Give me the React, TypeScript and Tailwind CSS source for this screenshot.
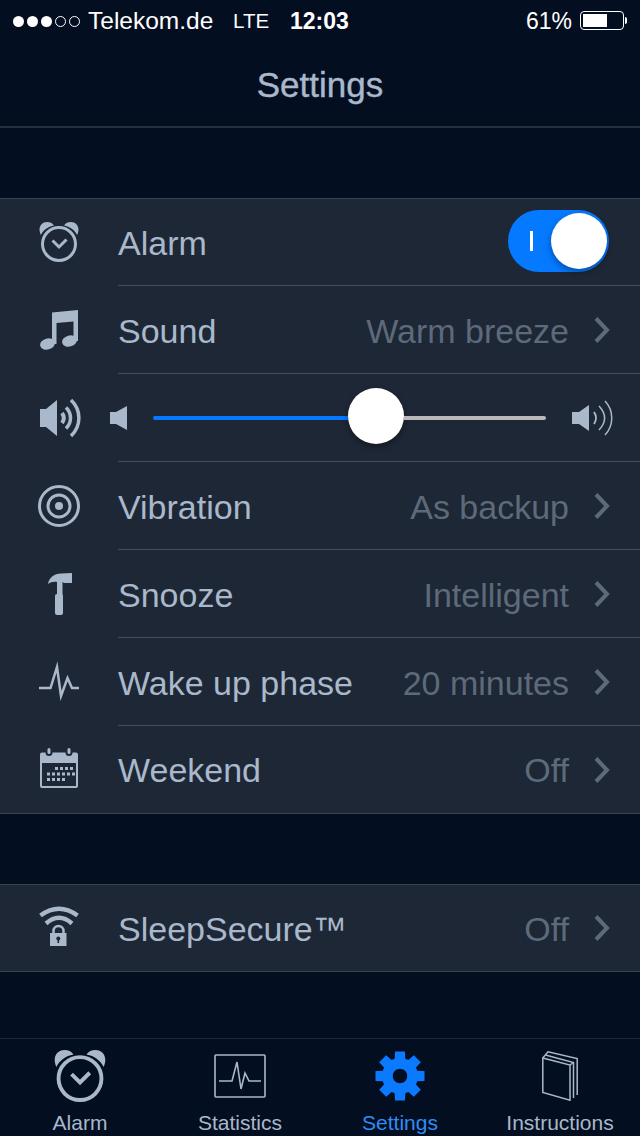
import type { ReactNode } from 'react';

const font = '[font-family:"Liberation_Sans",Arial,sans-serif]';
const ink = '#a9b8cb';

function Chevron() {
  return (
    <svg width="16" height="26" viewBox="0 0 16 26" className="ml-[25px] shrink-0">
      <path d="M2 1.500L13 13 2 24.500" fill="none" stroke="#5d6a7a" strokeWidth="4" />
    </svg>
  );
}

function AlarmIcon({ size = 40, stroke = 3 }: { size?: number; stroke?: number }) {
  return (
    <svg width={size} height={size} viewBox="0 0 40 40" fill="none">
      <circle cx="20" cy="22" r="16.500" stroke={ink} strokeWidth={stroke} />
      <path d="M13.500 18.500l6.500 6.500 7.500-7.500" stroke={ink} strokeWidth={stroke} />
      <path d="M1.800 13C-1.500 6 2 0 8 0c3 0 5.500 1 7 3.500C9 4.500 4.500 8 1.800 13z" fill={ink} />
      <path d="M38.200 13C41.500 6 38 0 32 0c-3 0-5.500 1-7 3.500C31 4.500 35.500 8 38.200 13z" fill={ink} />
    </svg>
  );
}

function NoteIcon() {
  return (
    <svg width="38" height="40" viewBox="0 0 38 40" fill={ink}>
      <path d="M12 2.500L38 0v31h-4.500V11.500L16.500 13v21H12z" />
      <ellipse cx="7.500" cy="34" rx="7.500" ry="5.500" transform="rotate(-15 7.500 34)" />
      <ellipse cx="29.500" cy="31" rx="7.500" ry="5.500" transform="rotate(-15 29.500 31)" />
    </svg>
  );
}

function SpeakerIcon() {
  return (
    <svg width="41" height="40" viewBox="0 0 41 40" fill="none" className="ml-[3px]">
      <path d="M0 11h6L17 2v36L6 29H0z" fill={ink} />
      <path d="M22 15c2.200 3 2.200 7 0 10" stroke={ink} strokeWidth="4" />
      <path d="M26 9.500c6 6 6 15 0 21" stroke={ink} strokeWidth="3.500" />
      <path d="M31 2c10.500 10 10.500 26 0 36" stroke={ink} strokeWidth="3.500" />
    </svg>
  );
}

function VibrationIcon() {
  return (
    <svg width="42" height="42" viewBox="0 0 42 42" fill="none" stroke={ink}>
      <circle cx="21" cy="21" r="19.500" strokeWidth="3" />
      <circle cx="21" cy="21" r="11" strokeWidth="3" />
      <circle cx="21" cy="21" r="4" fill={ink} stroke="none" />
    </svg>
  );
}

function HammerIcon() {
  return (
    <svg width="24" height="42" viewBox="0 0 24 42" fill={ink} className="ml-[2px]">
      <path d="M0 11C1 5 6 .5 13 .5L24 0v10h-8l-1.500-1H9C6 8.500 2.500 9 0 11z" />
      <rect x="9" y="8" width="5.500" height="15" />
      <rect x="7" y="21" width="8" height="21" rx="2" />
    </svg>
  );
}

function PulseIcon() {
  return (
    <svg width="40" height="40" viewBox="0 0 40 40" fill="none" className="mb-[3px]">
      <path d="M0 27h11.500L18 6l4 29 6.500-18 4.500 10h7" stroke={ink} strokeWidth="2.500" strokeMiterlimit="10" />
    </svg>
  );
}

const calendarDots = [
  { y: 19, xs: [15, 20, 25, 30] },
  { y: 24.5, xs: [7, 12, 17, 22, 27, 32] },
  { y: 30, xs: [7, 12, 17, 22] },
];

function CalendarIcon() {
  return (
    <svg width="38" height="40" viewBox="0 0 38 40" fill="none" className="mb-[3px]">
      <path
        d="M2 4.500h3.500a3.500 3.500 0 0 0 7 0h13a3.500 3.500 0 0 0 7 0H36a2 2 0 0 1 2 2V38a2 2 0 0 1-2 2H2a2 2 0 0 1-2-2V6.500a2 2 0 0 1 2-2z"
        fill={ink}
      />
      <rect x="2" y="15" width="34" height="23" fill="#1e2735" />
      <rect x="7.500" y="0" width="3" height="6" rx="1.500" fill={ink} />
      <rect x="27.500" y="0" width="3" height="6" rx="1.500" fill={ink} />
      {calendarDots.map((row) =>
        row.xs.map((x) => <rect key={`${row.y}-${x}`} x={x} y={row.y} width="3" height="3" fill={ink} />),
      )}
    </svg>
  );
}

function SecureIcon() {
  return (
    <svg width="40" height="40" viewBox="0 0 40 40" fill="none" className="mb-[4px]">
      <path d="M1.500 9.500Q20-4 38.500 9.500" stroke={ink} strokeWidth="4.500" />
      <path d="M7 17.500Q20 6 33 17.500" stroke={ink} strokeWidth="4.500" />
      <path d="M14.500 28v-3a5 5 0 0 1 10 0v3" stroke={ink} strokeWidth="2.500" />
      <rect x="11" y="27" width="16.500" height="13" fill={ink} />
      <circle cx="19.300" cy="32.500" r="2" fill="#1e2735" />
      <rect x="18.500" y="33" width="1.600" height="4" fill="#1e2735" />
    </svg>
  );
}

function StatsIcon() {
  return (
    <svg width="52" height="44" viewBox="0 0 52 44" fill="none">
      <rect x="1" y="1" width="50" height="42" rx="1" stroke={ink} strokeWidth="1.600" />
      <path d="M5 27h13l5-19 4 27 4-16 4 8h12" stroke={ink} strokeWidth="1.600" />
    </svg>
  );
}

// eight teeth, worked out from the centre of a 50 box
function gearPath() {
  const pts: string[] = [];
  for (let i = 0; i < 8; i++) {
    const a = (i * Math.PI) / 4 - Math.PI / 2;
    const p = (r: number, d: number) => `${(25 + r * Math.cos(a + d)).toFixed(2)} ${(25 + r * Math.sin(a + d)).toFixed(2)}`;
    pts.push(p(18, -0.3), p(25, -0.2), p(25, 0.2), p(18, 0.3));
  }
  return `M${pts.join('L')}zM25 17.700a7.300 7.300 0 1 0 0 14.600 7.300 7.300 0 0 0 0-14.600z`;
}

function GearIcon() {
  return (
    <svg width="50" height="50" viewBox="0 0 50 50">
      <path fillRule="evenodd" fill="#0a7aff" d={gearPath()} />
    </svg>
  );
}

function BookIcon() {
  return (
    <svg width="36" height="50" viewBox="0 0 36 50" fill="none" stroke={ink} strokeWidth="1.500">
      <path d="M.8 7L28 14v35.200L.8 41.500z" />
      <path d="M.8 7L6 .8l29.200 6.700V44" />
      <path d="M3.500 4l28 7.500V47" />
      <path d="M28 14l3.500-2.500" />
    </svg>
  );
}

function Row({ icon, label, value, last, height }: { icon: ReactNode; label: string; value?: string; last?: boolean; height: string }) {
  const nudge = last ? 'mt-[2px]' : 'mt-[4px]';
  return (
    <div className={`flex items-stretch ${height}`}>
      <div className="flex w-[118px] shrink-0 items-center justify-center">{icon}</div>
      <div className={`flex min-w-0 flex-1 items-center pr-[30px] ${last ? '' : 'border-b border-[#454d59]'}`}>
        <span className={`text-[34px] text-[#a9b8cb] ${nudge}`}>{label}</span>
        <span className={`ml-auto text-[34px] text-[#5d6a7a] ${nudge}`}>{value}</span>
        <Chevron />
      </div>
    </div>
  );
}

function Tab({ icon, label, active }: { icon: ReactNode; label: string; active?: boolean }) {
  return (
    <div className="flex w-[160px] flex-col items-center">
      <div className="flex h-[72px] items-center justify-center pt-[1px]">{icon}</div>
      <span className={`text-[21px] leading-[24px] ${active ? 'text-[#2f8cf5]' : 'text-[#a9b8cb]'}`}>{label}</span>
    </div>
  );
}

export default function App() {
  return (
    <div className={`flex h-[1136px] w-[640px] flex-col overflow-hidden bg-[#030e20] ${font}`}>
      {/* status bar */}
      <div className="flex h-[40px] items-center px-[13px] pt-[2px] text-[24px] text-white">
        <div className="flex gap-[3px]">
          <span className="h-[11px] w-[11px] rounded-full bg-white" />
          <span className="h-[11px] w-[11px] rounded-full bg-white" />
          <span className="h-[11px] w-[11px] rounded-full bg-white" />
          <span className="h-[11px] w-[11px] rounded-full border border-white" />
          <span className="h-[11px] w-[11px] rounded-full border border-white" />
        </div>
        <span className="ml-[8px] w-[145px] text-[24.500px]">Telekom.de</span>
        <span className="w-[57px] text-[20.500px]">LTE</span>
        <span className="text-[23px] font-bold">12:03</span>
        <span className="ml-auto text-[23px]">61%</span>
        <div className="mb-[2px] ml-[8px] flex items-center">
          <div className="flex h-[19px] w-[44px] rounded-[4px] border border-white p-[2px]">
            <div className="w-[24px] bg-white" />
          </div>
          <div className="ml-[1px] h-[7px] w-[2px] rounded-r-full bg-white" />
        </div>
      </div>

      {/* nav */}
      <div className="flex h-[88px] items-center justify-center border-b-2 border-[#262f3c]">
        <span className="mt-[4px] text-[35px] text-[#a9b8cb] [-webkit-text-stroke:0.4px_#a9b8cb]">Settings</span>
      </div>

      {/* main group */}
      <div className="mt-[70px] border-y border-[#3a424e] bg-[#1e2735]">
        <div className="flex h-[87px] items-stretch">
          <div className="flex w-[118px] shrink-0 items-center justify-center pb-[2px]"><AlarmIcon /></div>
          <div className="flex flex-1 items-center justify-between border-b border-[#454d59] pr-[31px]">
            <span className="mt-[2px] text-[34px] text-[#a9b8cb]">Alarm</span>
            <div className="mb-[2px] flex h-[62px] w-[101px] items-center rounded-full bg-[#0579ff] pl-[22px] pr-[2px]">
              <span className="h-[20px] w-[3px] bg-white" />
              <span className="ml-auto h-[56px] w-[56px] rounded-full bg-white shadow-[0_3px_6px_rgba(0,0,0,0.35)]" />
            </div>
          </div>
        </div>
        <Row height="h-[88px]" icon={<NoteIcon />} label="Sound" value="Warm breeze" />
        <div className="flex h-[88px] items-stretch">
          <div className="flex w-[118px] shrink-0 items-center justify-center"><SpeakerIcon /></div>
          <div className="flex flex-1 items-center border-b border-[#454d59] pr-[26px]">
            <svg width="17" height="24" viewBox="0 0 17 24" className="ml-[-8px] mr-[26px] shrink-0">
              <path d="M0 6h6L17 0v24L6 18H0z" fill="#a9b8cb" />
            </svg>
            <div className="h-[4px] w-[195px] rounded-l-full bg-[#0579ff]" />
            <div className="mb-[3px] h-[56px] w-[56px] shrink-0 rounded-full bg-white shadow-[0_3px_6px_rgba(0,0,0,0.35)]" />
            <div className="h-[4px] w-[142px] rounded-r-full bg-[#b9b9b9]" />
            <svg width="41" height="36" viewBox="0 0 41 36" fill="none" className="ml-[26px] shrink-0">
              <path d="M0 12h7L17 5v26L7 24H0z" fill="#a9b8cb" />
              <path d="M22 12c2.500 3.500 2.500 8.500 0 12" stroke="#a9b8cb" strokeWidth="2" />
              <path d="M27 6c7.500 8 7.500 16 0 24" stroke="#a9b8cb" strokeWidth="1.500" />
              <path d="M33 1c9 9.500 9 24.500 0 34" stroke="#a9b8cb" strokeWidth="1.500" />
            </svg>
          </div>
        </div>
        <Row height="h-[88px]" icon={<VibrationIcon />} label="Vibration" value="As backup" />
        <Row height="h-[88px]" icon={<HammerIcon />} label="Snooze" value="Intelligent" />
        <Row height="h-[88px]" icon={<PulseIcon />} label="Wake up phase" value="20 minutes" />
        <Row height="h-[87px]" icon={<CalendarIcon />} label="Weekend" value="Off" last />
      </div>

      {/* secure group */}
      <div className="mt-[70px] border-y border-[#3a424e] bg-[#1e2735]">
        <Row height="h-[86px]" icon={<SecureIcon />} label="SleepSecure™" value="Off" last />
      </div>

      {/* tab bar */}
      <div className="mt-auto flex h-[98px] border-t border-[#1b2633]">
        <Tab icon={<AlarmIcon size={52} stroke={3} />} label="Alarm" />
        <Tab icon={<StatsIcon />} label="Statistics" />
        <Tab icon={<GearIcon />} label="Settings" active />
        <Tab icon={<BookIcon />} label="Instructions" />
      </div>
    </div>
  );
}
